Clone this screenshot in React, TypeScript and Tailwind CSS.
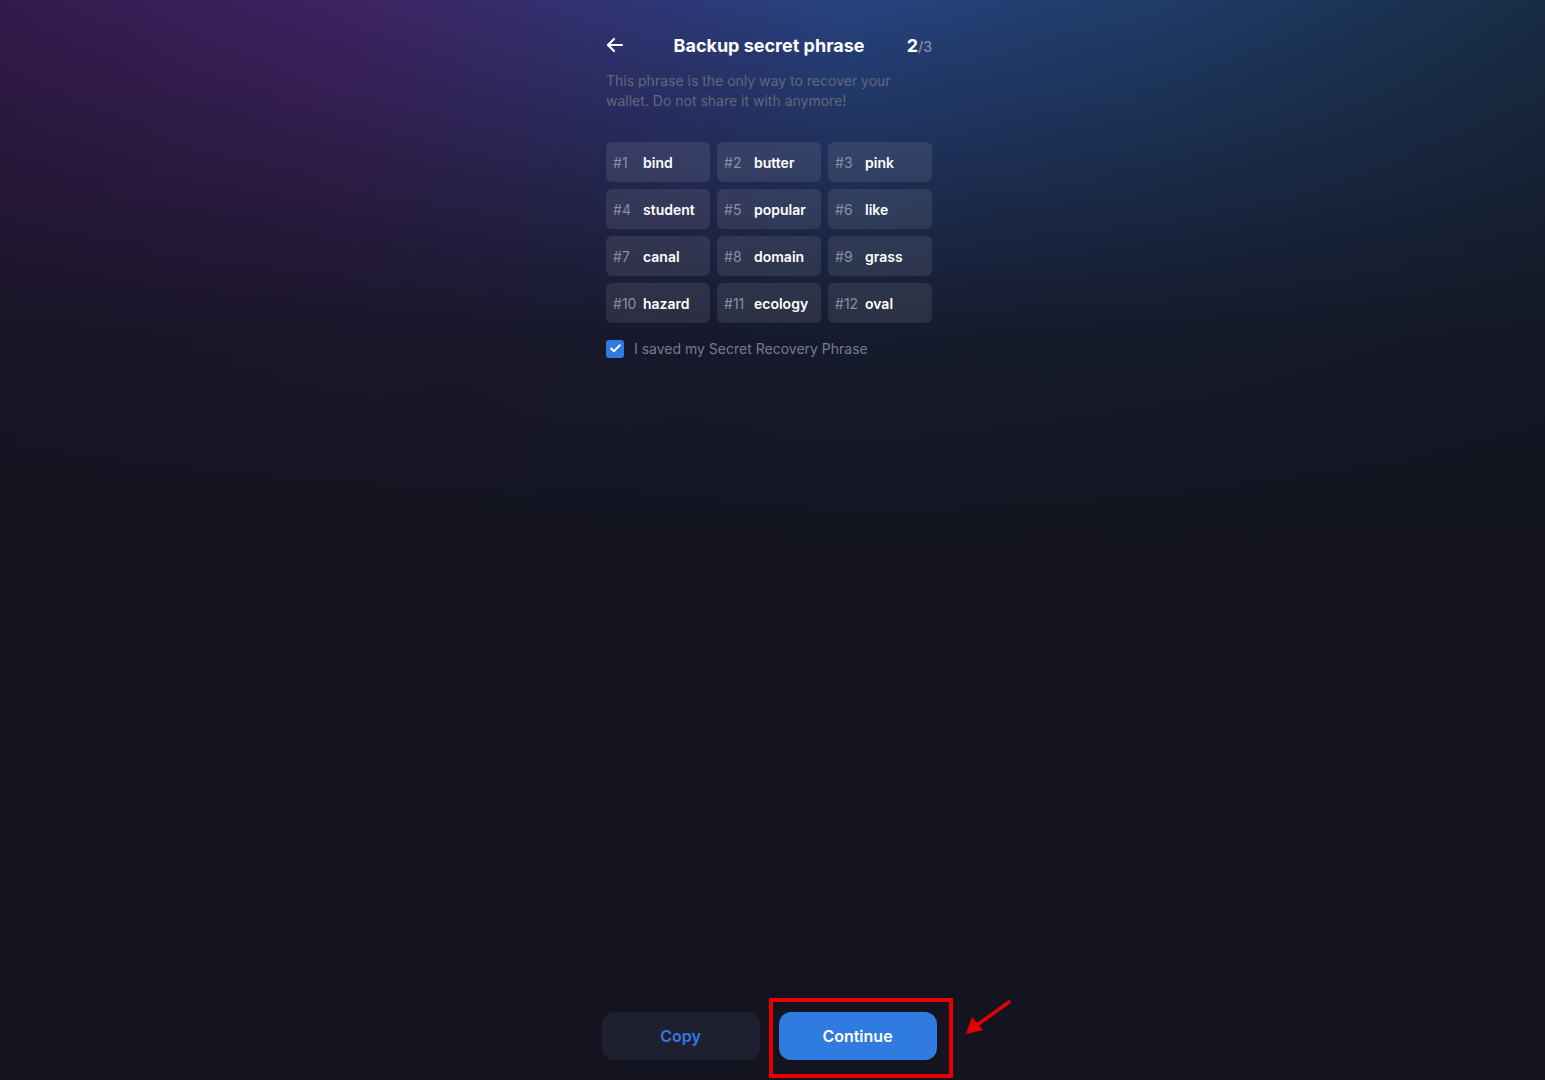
import { Check } from 'lucide-react';

const words = [
  'bind', 'butter', 'pink',
  'student', 'popular', 'like',
  'canal', 'domain', 'grass',
  'hazard', 'ecology', 'oval',
];

export default function App() {
  return (
    <div className="relative h-[1080px] w-full overflow-hidden bg-[#13141f] font-['Inter',sans-serif]">
      {/* top glow */}
      <div className="absolute inset-x-0 top-0 h-[560px] bg-[linear-gradient(to_right,#341a4c_0%,#3f2262_22%,#2f3676_42%,#26437f_55%,#1f3c68_75%,#182c45_100%)]" />
      <div className="absolute inset-x-0 top-0 h-[560px] bg-[linear-gradient(to_bottom,rgba(19,20,31,0)_0%,rgba(19,20,31,0.35)_25%,rgba(19,20,31,0.85)_60%,#13141f_100%)]" />

      <div className="relative flex h-full flex-col items-center pr-[7px]">
        <div className="w-[326px]">
          {/* header */}
          <div className="mt-[31px] grid h-[28px] grid-cols-[40px_1fr_40px] items-center">
            <svg width="18" height="16" viewBox="0 0 18 16" fill="none" stroke="white" strokeWidth="2.2" strokeLinecap="round" strokeLinejoin="round">
              <path d="M16 8H2" />
              <path d="M8 2L2 8l6 6" />
            </svg>
            <h1 className="text-center text-[18px] font-bold text-white">Backup secret phrase</h1>
            <div className="text-right text-[18px] font-bold text-white">
              2<span className="text-[14px] font-medium text-[#8a8fa3]">/3</span>
            </div>
          </div>

          <p className="mt-[12px] max-w-[300px] text-[14px] leading-[20px] text-[#62677b]">
            This phrase is the only way to recover your wallet. Do not share it with anymore!
          </p>

          {/* phrase grid */}
          <div className="mt-[31px] grid grid-cols-3 gap-[7px]">
            {words.map((w, i) => (
              <div key={w} className="flex h-[40px] items-center rounded-[6px] bg-white/[0.09] pl-[7px] text-[14px]">
                <span className="w-[30px] shrink-0 text-[#8b8fa0]">#{i + 1}</span>
                <span className="font-semibold text-white">{w}</span>
              </div>
            ))}
          </div>

          <label className="mt-[15px] flex items-center gap-[10px]">
            <span className="flex h-[18px] w-[18px] items-center justify-center rounded-[3px] bg-[#2f7be0]">
              <Check size={13} strokeWidth={3.5} color="white" />
            </span>
            <span className="text-[14px] text-[#767b8e]">I saved my Secret Recovery Phrase</span>
          </label>
        </div>

        {/* bottom buttons */}
        <div className="mt-auto mb-[20px] flex gap-[19px]">
          <button className="h-[48px] w-[158px] rounded-[12px] bg-[#1e1f30] text-[16px] font-semibold text-[#2f7be0]">
            Copy
          </button>
          <div className="relative">
            <button className="h-[48px] w-[158px] rounded-[12px] bg-[#2f7be0] text-[16px] font-semibold text-white">
              Continue
            </button>
            {/* annotation */}
            <div className="pointer-events-none absolute -left-[10px] -right-[16px] -top-[14px] -bottom-[18px] border-[4px] border-[#e60000]" />
            <svg className="absolute left-[186px] top-[-12px]" width="48" height="38" viewBox="0 0 48 38" fill="none">
              <path d="M44 2L12 25" stroke="#e60000" strokeWidth="3.5" strokeLinecap="round" />
              <path d="M1 34L7 17L18 30Z" fill="#e60000" />
            </svg>
          </div>
        </div>
      </div>
    </div>
  );
}
